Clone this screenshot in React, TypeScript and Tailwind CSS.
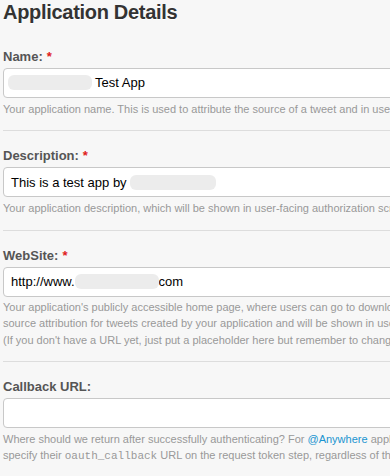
import React from "react";

const F = { fontFamily: '"Liberation Sans", Arial, sans-serif' };

function Blob({ w }: { w: number }) {
  return (
    <span
      className="inline-block h-[15px] rounded-[6px] bg-[#ececec] align-[-3px] blur-[0.6px]"
      style={{ width: w }}
    />
  );
}

function Label({ text, req }: { text: string; req?: boolean }) {
  return (
    <div className="text-[13px] font-bold leading-[16px] text-[#555555]">
      {text}
      {req && <span className="ml-[4px] text-[#e0201a]">*</span>}
    </div>
  );
}

function Input({ children }: { children?: React.ReactNode }) {
  return (
    <div className="mt-[3px] flex h-[30px] w-[520px] items-center rounded-[4px] border border-[#c8c8c8] bg-white pl-[7px] text-[13px] text-black whitespace-nowrap">
      {children}
    </div>
  );
}

function Help({ lines }: { lines: React.ReactNode[] }) {
  return (
    <div className="mt-[2.5px] text-[11px] leading-[16.3px] text-[#999999]">
      {lines.map((l, i) => (
        <div key={i} className="whitespace-nowrap">
          {l}
        </div>
      ))}
    </div>
  );
}

function Divider() {
  return <div className="mt-[13.5px] mb-[17px] h-px w-[520px] bg-[#dddddd]" />;
}

export default function App() {
  return (
    <div className="h-[476px] w-[390px] overflow-hidden bg-[#f7f7f7]" style={F}>
      <div className="pl-[3px]">
        <h1 className="text-[20px] font-bold leading-[24px] tracking-[-0.3px] text-[#333333] [text-shadow:0_1px_0_#ffffff]">
          Application Details
        </h1>
        <div className="mt-[25px]">
          <Label text="Name:" req />
          <Input>
            <span className="-ml-[3px] mr-[3px]">
              <Blob w={84} />
            </span>
            Test App
          </Input>
          <Help
            lines={[
              "Your application name. This is used to attribute the source of a tweet and in user-facing authorization screens.",
            ]}
          />
        </div>
        <Divider />
        <div>
          <Label text="Description:" req />
          <Input>
            This is a test app by&nbsp;
            <Blob w={86} />
          </Input>
          <Help
            lines={[
              "Your application description, which will be shown in user-facing authorization screens. Between 10 and 200 characters max.",
            ]}
          />
        </div>
        <Divider />
        <div>
          <Label text="WebSite:" req />
          <Input>
            http://www.
            <Blob w={84} />
            com
          </Input>
          <Help
            lines={[
              "Your application's publicly accessible home page, where users can go to download, make use of, or find out more information about your application. This fully-qualified URL is used in the",
              "source attribution for tweets created by your application and will be shown in user-facing authorization screens.",
              "(If you don't have a URL yet, just put a placeholder here but remember to change it later.)",
            ]}
          />
        </div>
        <Divider />
        <div>
          <Label text="Callback URL:" />
          <Input />
          <Help
            lines={[
              <>
                Where should we return after successfully authenticating? For{" "}
                <span className="text-[#1a94d0]">@Anywhere</span> applications, only the domain specified in the callback will be used.
              </>,
              <>
                specify their{" "}
                <span style={{ fontFamily: '"Liberation Mono", "Courier New", monospace' }}>oauth_callback</span> URL on
                the request token step, regardless of the value given here.
              </>,
            ]}
          />
        </div>
      </div>
    </div>
  );
}
